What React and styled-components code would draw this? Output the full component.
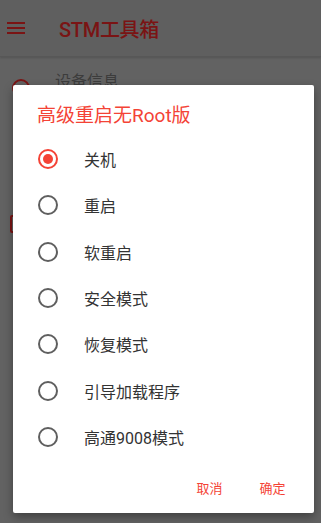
import { useState } from "react";
import styled, { createGlobalStyle } from "styled-components";

const GlobalStyle = createGlobalStyle`
  html, body {
    margin: 0;
    padding: 0;
    background: #626262;
  }
  body {
    font-family: Roboto, "Noto Sans CJK SC", sans-serif;
    -webkit-font-smoothing: antialiased;
  }
`;

const Screen = styled.div`
  position: relative;
  width: 321px;
  height: 523px;
  overflow: hidden;
  background: #626262;
`;

const Toolbar = styled.header`
  height: 56px;
  display: flex;
  align-items: center;
  background: #5f5f5f;
  border-bottom: 1px solid #575757;
  box-shadow: 0 1px 2px rgba(0, 0, 0, 0.15);
`;

const MenuButton = styled.div`
  width: 18px;
  margin-left: 7px;
  display: flex;
  flex-direction: column;
  gap: 3px;

  span {
    height: 2px;
    background: #7a1414;
  }
`;

const AppTitle = styled.h1`
  margin: 0 0 0 34px;
  font-size: 20px;
  font-weight: 500;
  color: #7a1414;
  letter-spacing: -0.3px;
`;

const List = styled.section`
  display: flex;
  flex-direction: column;
`;

const ListRow = styled.div`
  height: 68px;
  display: flex;
  align-items: flex-start;
  padding-top: 22px;
  box-sizing: border-box;
`;

const IconSlot = styled.div`
  width: 55px;
  padding-left: ${(p) => p.inset}px;
  box-sizing: border-box;
`;

const RowIcon = styled.div`
  width: 18px;
  height: 18px;
  box-sizing: border-box;
  border: 2px solid #7a1414;
  border-radius: ${(p) => (p.round ? "50%" : "2px")};
`;

const RowLabel = styled.span`
  font-size: 16px;
  line-height: 18px;
  color: #3c3c3c;
  margin-top: -6px;
`;

const Scrim = styled.div`
  position: absolute;
  inset: 0;
  display: flex;
  align-items: flex-start;
  padding: 85px 0 0 13px;
`;

const Dialog = styled.div`
  width: 301px;
  height: 428px;
  background: #ffffff;
  border-radius: 2px;
  box-shadow: 0 4px 10px rgba(0, 0, 0, 0.35);
  display: flex;
  flex-direction: column;
`;

const DialogTitle = styled.h2`
  margin: 0;
  padding: 18px 24px 0;
  height: 26px;
  line-height: 26px;
  font-size: 19px;
  font-weight: 400;
  color: #f44336;
`;

const Options = styled.div`
  margin-top: 7px;
  display: flex;
  flex-direction: column;
`;

const Option = styled.label`
  height: 46.3px;
  display: flex;
  align-items: center;
  padding-left: 25px;
  gap: 26px;
  cursor: pointer;
`;

const Radio = styled.span`
  box-sizing: border-box;
  width: 20px;
  height: 20px;
  border-radius: 50%;
  border: 2px solid ${(p) => (p.checked ? "#f44336" : "#5f5f5f")};
  display: flex;
  align-items: center;
  justify-content: center;

  &::after {
    content: "";
    width: 10px;
    height: 10px;
    border-radius: 50%;
    background: #f44336;
    display: ${(p) => (p.checked ? "block" : "none")};
  }
`;

const OptionText = styled.span`
  font-size: 16px;
  color: #333333;
`;

const Actions = styled.div`
  margin-top: auto;
  display: flex;
  justify-content: flex-end;
  padding: 0 10px 8px 0;
`;

const ActionButton = styled.button`
  min-width: 63px;
  height: 36px;
  border: none;
  background: transparent;
  padding: 0 8px;
  font-family: Roboto, "Noto Sans CJK SC", sans-serif;
  font-size: 13px;
  color: #f44336;
`;

const options = [
  "关机",
  "重启",
  "软重启",
  "安全模式",
  "恢复模式",
  "引导加载程序",
  "高通9008模式",
];

const rows = [
  { label: "设备信息", round: true, inset: 12 },
  { label: "", round: true, inset: 14 },
  { label: "", round: false, inset: 10 },
  { label: "", round: true, inset: 13 },
  { label: "", round: true, inset: 13 },
  { label: "", round: false, inset: 13 },
];

export default function App() {
  const [selected, setSelected] = useState(0);

  return (
    <>
      <GlobalStyle />
      <Screen>
        <Toolbar>
          <MenuButton>
            <span />
            <span />
            <span />
          </MenuButton>
          <AppTitle>STM工具箱</AppTitle>
        </Toolbar>
        <List>
          {rows.map((r, i) => (
            <ListRow key={i}>
              <IconSlot inset={r.inset}>
                <RowIcon round={r.round} />
              </IconSlot>
              <RowLabel>{r.label}</RowLabel>
            </ListRow>
          ))}
        </List>

        <Scrim>
          <Dialog>
            <DialogTitle>高级重启无Root版</DialogTitle>
            <Options>
              {options.map((o, i) => (
                <Option key={o} onClick={() => setSelected(i)}>
                  <Radio checked={selected === i} />
                  <OptionText>{o}</OptionText>
                </Option>
              ))}
            </Options>
            <Actions>
              <ActionButton>取消</ActionButton>
              <ActionButton>确定</ActionButton>
            </Actions>
          </Dialog>
        </Scrim>
      </Screen>
    </>
  );
}
